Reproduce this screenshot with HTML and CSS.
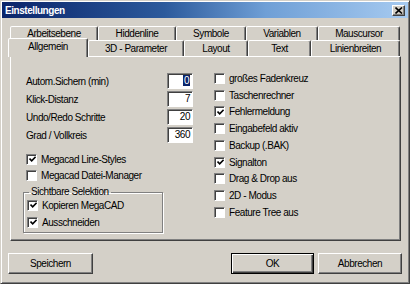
FILE: index.html
```html
<!DOCTYPE html>
<html lang="de">
<head>
    <meta charset="UTF-8">
    <title>Einstellungen</title>
    <link rel="stylesheet" href="styles.css">
</head>
<body>
    <div class="window">
        <div class="titlebar">
            <span class="title">Einstellungen</span>
            <span class="close">
                <svg width="8" height="7" viewBox="0 0 8 7"><path d="M0.5 0.5 L7 6.5 M7 0.5 L0.5 6.5" stroke="#000" stroke-width="1.6" fill="none"/></svg>
            </span>
        </div>

        <div class="tabs">
            <div class="tabrow back">
                <div class="tab w-arbeit">Arbeitsebene</div>
                <div class="tab w-hidden">Hiddenline</div>
                <div class="tab w-symbole">Symbole</div>
                <div class="tab w-variablen">Variablen</div>
                <div class="tab w-maus">Mauscursor</div>
            </div>
            <div class="tabrow front">
                <div class="tab active w-allgemein">Allgemein</div>
                <div class="tab w-3d">3D - Parameter</div>
                <div class="tab w-layout">Layout</div>
                <div class="tab w-text">Text</div>
                <div class="tab w-linien">Linienbreiten</div>
            </div>
        </div>

        <div class="panel">
            <div class="col-left">
                <div class="field"><span>Autom.Sichern (min)</span><span class="input"><span class="sel">0</span></span></div>
                <div class="field"><span>Klick-Distanz</span><span class="input">7</span></div>
                <div class="field"><span>Undo/Redo Schritte</span><span class="input">20</span></div>
                <div class="field"><span>Grad / Vollkreis</span><span class="input">360</span></div>

                <div class="check first"><span class="box"><svg class="tick" width="7" height="7" viewBox="0 0 7 7"><path d="M0.5 2.5 L2.7 4.8 L6.6 0.8" stroke="#000" stroke-width="1.6" fill="none"/></svg></span>Megacad Line-Styles</div>
                <div class="check"><span class="box"></span>Megacad Datei-Manager</div>

                <fieldset class="group">
                    <legend>Sichtbare Selektion</legend>
                    <div class="check"><span class="box"><svg class="tick" width="7" height="7" viewBox="0 0 7 7"><path d="M0.5 2.5 L2.7 4.8 L6.6 0.8" stroke="#000" stroke-width="1.6" fill="none"/></svg></span>Kopieren MegaCAD</div>
                    <div class="check"><span class="box"><svg class="tick" width="7" height="7" viewBox="0 0 7 7"><path d="M0.5 2.5 L2.7 4.8 L6.6 0.8" stroke="#000" stroke-width="1.6" fill="none"/></svg></span>Ausschneiden</div>
                </fieldset>
            </div>

            <div class="col-right">
                <div class="check"><span class="box"></span>großes Fadenkreuz</div>
                <div class="check"><span class="box"></span>Taschenrechner</div>
                <div class="check"><span class="box"><svg class="tick" width="7" height="7" viewBox="0 0 7 7"><path d="M0.5 2.5 L2.7 4.8 L6.6 0.8" stroke="#000" stroke-width="1.6" fill="none"/></svg></span>Fehlermeldung</div>
                <div class="check"><span class="box"></span>Eingabefeld aktiv</div>
                <div class="check"><span class="box"></span>Backup (.BAK)</div>
                <div class="check"><span class="box"><svg class="tick" width="7" height="7" viewBox="0 0 7 7"><path d="M0.5 2.5 L2.7 4.8 L6.6 0.8" stroke="#000" stroke-width="1.6" fill="none"/></svg></span>Signalton</div>
                <div class="check"><span class="box"></span>Drag &amp; Drop aus</div>
                <div class="check"><span class="box"></span>2D - Modus</div>
                <div class="check"><span class="box"></span>Feature Tree aus</div>
            </div>
        </div>

        <div class="buttons">
            <button class="btn w-speichern">Speichern</button>
            <div class="right">
                <button class="btn default w-ok">OK</button>
                <button class="btn w-abbrechen">Abbrechen</button>
            </div>
        </div>
    </div>
</body>
</html>
```

FILE: styles.css
```css
* {
    box-sizing: border-box;
}

body {
    margin: 0;
    font-family: "Liberation Sans", Arial, sans-serif;
    font-size: 10px;
    letter-spacing: -0.45px;
    color: #000;
    background-color: #d4d0c8;
}

.window {
    width: 410px;
    height: 284px;
    padding: 1px;
    background-color: #d4d0c8;
    border: 1px solid;
    border-color: #d4d0c8 #404040 #404040 #d4d0c8;
    box-shadow: inset 1px 1px #fff, inset -1px -1px #808080;
}

/* title bar */
.titlebar {
    display: flex;
    align-items: center;
    justify-content: space-between;
    height: 16px;
    padding: 0 3px 0 3px;
    background: linear-gradient(to right, #0a246a 0%, #2c5a9c 40%, #6f9fd6 65%, #a6caf0 100%);
    color: #fff;
    font-weight: bold;
}

.close {
    display: flex;
    align-items: center;
    justify-content: center;
    width: 13px;
    height: 11px;
    background-color: #d4d0c8;
    border: 1px solid;
    border-color: #fff #404040 #404040 #fff;
    box-shadow: inset -1px -1px #808080;
}

/* tabs */
.tabs {
    margin: 8px 0 0 8px;
    width: 390px;
}

.tabrow {
    display: flex;
    height: 14px;
}

.tabrow.front {
    height: 16px;
}

.tab {
    flex: none;
    border: 1px solid;
    border-bottom: none;
    border-color: #fff #404040 transparent #fff;
    border-radius: 2px 2px 0 0;
    box-shadow: inset -1px 0 #808080;
    background-color: #d4d0c8;
    text-align: center;
    line-height: 13px;
}

.tabrow.front .tab {
    line-height: 16px;
}

.tab.active {
    position: relative;
    z-index: 1;
    height: 19px;
    margin-top: -2px;
    margin-left: -2px;
    line-height: 15px;
}

.w-arbeit { width: 88px; }
.w-hidden { width: 78px; }
.w-symbole { width: 70px; }
.w-variablen { width: 72px; }
.w-maus { width: 82px; }

.w-allgemein { width: 80px; }
.w-3d { width: 96px; }
.w-layout { width: 64px; }
.w-text { width: 63px; }
.w-linien { width: 89px; }

/* panel */
.panel {
    display: grid;
    grid-template-columns: 167px 1fr;
    column-gap: 21px;
    width: 391px;
    height: 185px;
    margin-left: 8px;
    padding: 15px 0 0 15px;
    border: 1px solid;
    border-color: #fff #404040 #404040 #fff;
    box-shadow: inset -1px -1px #808080;
}

.col-left {
    display: flex;
    flex-direction: column;
}

.field {
    display: flex;
    align-items: center;
    justify-content: space-between;
    height: 18px;
}

.input {
    width: 26px;
    height: 16px;
    padding-right: 2px;
    background-color: #fff;
    border: 1px solid;
    border-color: #808080 #fff #fff #808080;
    box-shadow: inset 1px 1px #404040;
    text-align: right;
    line-height: 14px;
}

.sel {
    background-color: #0a246a;
    color: #fff;
    padding: 0 1px;
}

.check {
    display: flex;
    align-items: center;
    gap: 4px;
    height: 16px;
    white-space: nowrap;
}

.check.first {
    margin-top: 7px;
}

.box {
    display: flex;
    align-items: center;
    justify-content: center;
    flex: none;
    width: 11px;
    height: 11px;
    background-color: #fff;
    border: 1px solid;
    border-color: #808080 #fff #fff #808080;
    box-shadow: inset 1px 1px #404040;
}

.tick {
    margin: 1px 0 0 1px;
}

.group {
    width: 140px;
    height: 47px;
    margin: 3px 0 0 -3px;
    padding: 0 0 0 3px;
    border: 1px solid #808080;
    box-shadow: 1px 1px #fff, inset 1px 1px #fff;
}

.group legend {
    margin-left: 2px;
    padding: 0 2px;
    line-height: 12px;
}

.group .check {
    margin-top: -1px;
}

.group .check + .check {
    margin-top: 1px;
}

.col-right {
    display: flex;
    flex-direction: column;
    margin-top: -2px;
}

.col-right .check {
    height: 16.75px;
}

/* bottom buttons */
.buttons {
    display: flex;
    justify-content: space-between;
    margin: 12px 6px 0 6px;
}

.right {
    display: flex;
    gap: 4px;
}

.btn {
    height: 21px;
    padding: 0;
    font-family: inherit;
    font-size: 10px;
    letter-spacing: -0.45px;
    color: #000;
    background-color: #d4d0c8;
    border: 1px solid;
    border-color: #fff #404040 #404040 #fff;
    box-shadow: inset -1px -1px #808080;
}

.btn.default {
    border-color: #000;
    box-shadow: inset 1px 1px #fff, inset -1px -1px #404040, inset -2px -2px #808080;
}

.w-speichern { width: 85px; }
.w-ok { width: 83px; }
.w-abbrechen { width: 84px; }
```
